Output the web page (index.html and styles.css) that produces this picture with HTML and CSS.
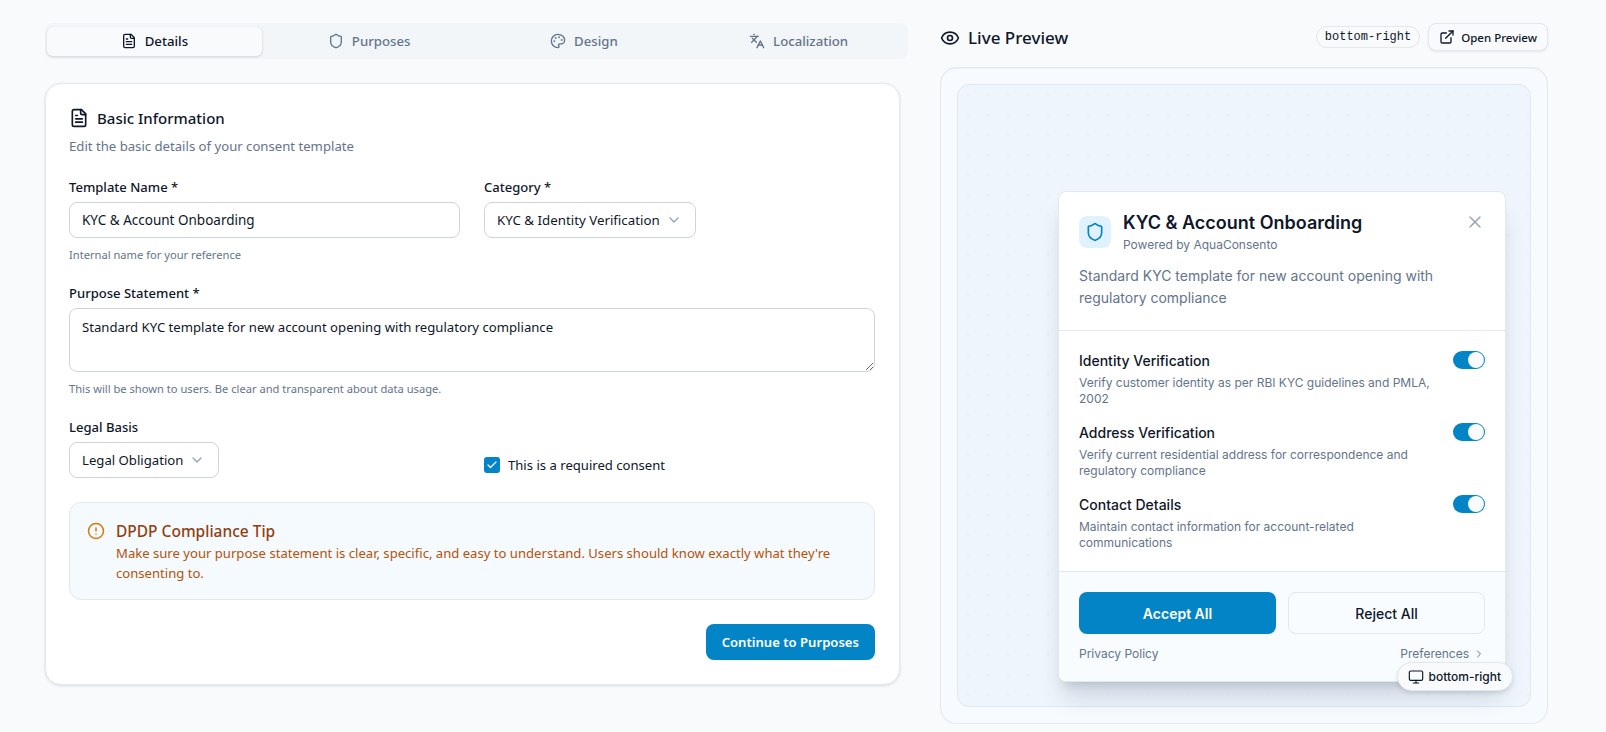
FILE: index.html
```html
<!DOCTYPE html>
<html lang="en">
<head>
<meta charset="utf-8">
<title>Consent Template</title>
<link rel="stylesheet" href="styles.css">
</head>
<body>
<main class="page">
  <section class="editor">
    <nav class="tabs">
      <div class="tab active"><svg class="ic16" viewBox="0 0 24 24"><path d="M15 2H6a2 2 0 0 0-2 2v16a2 2 0 0 0 2 2h12a2 2 0 0 0 2-2V7Z"/><path d="M14 2v4a2 2 0 0 0 2 2h4"/><path d="M10 9H8"/><path d="M16 13H8"/><path d="M16 17H8"/></svg>Details</div>
      <div class="tab"><svg class="ic16" viewBox="0 0 24 24"><path d="M20 13c0 5-3.5 7.5-7.66 8.95a1 1 0 0 1-.67-.01C7.5 20.5 4 18 4 13V6a1 1 0 0 1 1-1c2 0 4.5-1.2 6.24-2.72a1.17 1.17 0 0 1 1.52 0C14.51 3.81 17 5 19 5a1 1 0 0 1 1 1z"/></svg>Purposes</div>
      <div class="tab"><svg class="ic16" viewBox="0 0 24 24"><circle cx="13.5" cy="6.5" r=".5" class="fill"/><circle cx="17.5" cy="10.5" r=".5" class="fill"/><circle cx="8.5" cy="7.5" r=".5" class="fill"/><circle cx="6.5" cy="12.5" r=".5" class="fill"/><path d="M12 2C6.5 2 2 6.5 2 12s4.5 10 10 10c.926 0 1.648-.746 1.648-1.688 0-.437-.18-.835-.437-1.125-.29-.289-.438-.652-.438-1.125a1.64 1.64 0 0 1 1.668-1.668h1.996c3.051 0 5.555-2.503 5.555-5.554C21.965 6.012 17.461 2 12 2z"/></svg>Design</div>
      <div class="tab"><svg class="ic16" viewBox="0 0 24 24"><path d="m5 8 6 6"/><path d="m4 14 6-6 2-3"/><path d="M2 5h12"/><path d="M7 2h1"/><path d="m22 22-5-10-5 10"/><path d="M14 18h6"/></svg>Localization</div>
    </nav>

    <div class="card">
      <h2 class="card-title"><svg class="ic20" viewBox="0 0 24 24"><path d="M15 2H6a2 2 0 0 0-2 2v16a2 2 0 0 0 2 2h12a2 2 0 0 0 2-2V7Z"/><path d="M14 2v4a2 2 0 0 0 2 2h4"/><path d="M10 9H8"/><path d="M16 13H8"/><path d="M16 17H8"/></svg>Basic Information</h2>
      <p class="card-sub">Edit the basic details of your consent template</p>

      <div class="row-two">
        <div class="field">
          <label class="label">Template Name *</label>
          <input class="input" type="text" value="KYC &amp; Account Onboarding">
          <p class="help">Internal name for your reference</p>
        </div>
        <div class="field">
          <label class="label">Category *</label>
          <div class="select select-wide">KYC &amp; Identity Verification<svg class="chev" viewBox="0 0 24 24"><path d="m6 9 6 6 6-6"/></svg></div>
        </div>
      </div>

      <div class="field purpose">
        <label class="label">Purpose Statement *</label>
        <textarea class="textarea">Standard KYC template for new account opening with regulatory compliance</textarea>
        <p class="help">This will be shown to users. Be clear and transparent about data usage.</p>
      </div>

      <div class="row-two legal">
        <div class="field">
          <label class="label">Legal Basis</label>
          <div class="select">Legal Obligation<svg class="chev" viewBox="0 0 24 24"><path d="m6 9 6 6 6-6"/></svg></div>
        </div>
        <div class="check-row">
          <span class="checkbox"><svg viewBox="0 0 24 24"><path d="M20 6 9 17l-5-5"/></svg></span>
          <span>This is a required consent</span>
        </div>
      </div>

      <div class="tip">
        <svg class="tip-ic" viewBox="0 0 24 24"><circle cx="12" cy="12" r="10"/><line x1="12" x2="12" y1="8" y2="12"/><line x1="12" x2="12.01" y1="16" y2="16"/></svg>
        <div>
          <h3 class="tip-title">DPDP Compliance Tip</h3>
          <p class="tip-body">Make sure your purpose statement is clear, specific, and easy to understand. Users should know exactly what they're consenting to.</p>
        </div>
      </div>

      <div class="actions"><button class="btn-continue">Continue to Purposes</button></div>
    </div>
  </section>

  <section class="preview">
    <header class="preview-head">
      <h2 class="preview-title"><svg class="ic20" viewBox="0 0 24 24"><path d="M2.062 12.348a1 1 0 0 1 0-.696 10.75 10.75 0 0 1 19.876 0 1 1 0 0 1 0 .696 10.75 10.75 0 0 1-19.876 0"/><circle cx="12" cy="12" r="3"/></svg>Live Preview</h2>
      <div class="head-right">
        <span class="code-pill">bottom-right</span>
        <button class="btn-open"><svg class="ic16" viewBox="0 0 24 24"><path d="M15 3h6v6"/><path d="M10 14 21 3"/><path d="M18 13v6a2 2 0 0 1-2 2H5a2 2 0 0 1-2-2V8a2 2 0 0 1 2-2h6"/></svg>Open Preview</button>
      </div>
    </header>

    <div class="panel">
      <div class="stage">
        <div class="consent">
          <div class="consent-top">
            <div class="consent-head">
              <span class="shield"><svg viewBox="0 0 24 24"><path d="M20 13c0 5-3.5 7.5-7.66 8.95a1 1 0 0 1-.67-.01C7.5 20.5 4 18 4 13V6a1 1 0 0 1 1-1c2 0 4.5-1.2 6.24-2.72a1.17 1.17 0 0 1 1.52 0C14.51 3.81 17 5 19 5a1 1 0 0 1 1 1z"/></svg></span>
              <div class="consent-names">
                <h3>KYC &amp; Account Onboarding</h3>
                <p>Powered by AquaConsento</p>
              </div>
              <svg class="close" viewBox="0 0 24 24"><path d="M18 6 6 18"/><path d="m6 6 12 12"/></svg>
            </div>
            <p class="consent-desc">Standard KYC template for new account opening with regulatory compliance</p>
          </div>

          <div class="consent-items">
            <div class="item">
              <div class="item-text"><h4>Identity Verification</h4><p>Verify customer identity as per RBI KYC guidelines and PMLA, 2002</p></div>
              <span class="toggle"><span class="knob"></span></span>
            </div>
            <div class="item">
              <div class="item-text"><h4>Address Verification</h4><p>Verify current residential address for correspondence and regulatory compliance</p></div>
              <span class="toggle"><span class="knob"></span></span>
            </div>
            <div class="item">
              <div class="item-text"><h4>Contact Details</h4><p>Maintain contact information for account-related communications</p></div>
              <span class="toggle"><span class="knob"></span></span>
            </div>
          </div>

          <div class="consent-foot">
            <div class="foot-btns">
              <button class="btn-accept">Accept All</button>
              <button class="btn-reject">Reject All</button>
            </div>
            <div class="foot-links">
              <span>Privacy Policy</span>
              <span class="prefs">Preferences<svg viewBox="0 0 24 24"><path d="m9 18 6-6-6-6"/></svg></span>
            </div>
          </div>
        </div>
        <div class="badge"><svg viewBox="0 0 24 24"><rect width="20" height="14" x="2" y="3" rx="2"/><line x1="8" x2="16" y1="21" y2="21"/><line x1="12" x2="12" y1="17" y2="21"/></svg>bottom-right</div>
      </div>
    </div>
  </section>
</main>
</body>
</html>
```

FILE: styles.css
```css
* { box-sizing: border-box; }
html, body { margin: 0; height: 100%; }
body {
  background: #f8fafc;
  color: #0f172a;
  font-family: "Noto Sans", "Open Sans", sans-serif;
  font-size: 14px;
  overflow: hidden;
}
h2, h3, h4, p { margin: 0; }
button { font-family: inherit; cursor: pointer; }
svg {
  fill: none;
  stroke: currentColor;
  stroke-width: 2;
  stroke-linecap: round;
  stroke-linejoin: round;
  flex: none;
}
.fill { fill: currentColor; }
.ic16 { width: 16px; height: 16px; }
.ic20 { width: 20px; height: 20px; }

.page {
  display: grid;
  grid-template-columns: 863px 608px;
  column-gap: 32px;
  padding: 23px 58px 8px 45px;
}

/* tabs */
.tabs {
  display: grid;
  grid-template-columns: repeat(4, 1fr);
  height: 36px;
  padding: 4px 2px 3px;
  background: #f2f6f9;
  border-radius: 8px;
}
.tab {
  display: flex;
  align-items: center;
  justify-content: center;
  gap: 8px;
  padding-bottom: 1px;
  color: #64748b;
  font-weight: 500;
  font-size: 13.2px;
  border-radius: 6px;
}
.tab.active {
  background: #f8fafc;
  color: #0f172a;
  box-shadow: 0 1px 3px rgba(15, 23, 42, .16);
}

/* form card */
.card {
  margin: 24px 8px 0 0;
  padding: 24px 24px 24px 23px;
  height: 602px;
  background: #fff;
  border: 1px solid #e2e8f0;
  border-radius: 16px;
  box-shadow: 0 1px 3px rgba(15, 23, 42, .12);
}
.card-title {
  display: flex;
  align-items: center;
  gap: 8px;
  font-size: 15px;
  line-height: 20px;
  font-weight: 500;
}
.card-sub {
  margin-top: 8px;
  font-size: 13.15px;
  line-height: 20px;
  color: #64748b;
}
.row-two {
  display: grid;
  grid-template-columns: 391px 391px;
  column-gap: 24px;
  margin-top: 21px;
}
.field { display: flex; flex-direction: column; align-items: flex-start; }
.label {
  font-size: 13.05px;
  line-height: 20px;
  font-weight: 500;
  margin-bottom: 5px;
}
.input, .select, .textarea {
  border: 1px solid #cbd5e1;
  border-radius: 8px;
  background: #fff;
  color: #0f172a;
  font-family: inherit;
  font-size: 13.15px;
}
.input { width: 100%; height: 36px; padding: 0 12px; outline: none; font-size: 13.5px; }
.select {
  display: inline-flex;
  align-items: center;
  gap: 6px;
  height: 36px;
  padding: 0 13px 0 12px;
}
.select-wide { font-size: 13.3px; }
.chev { width: 16px; height: 16px; color: #94a3b8; }
.help {
  margin-top: 9px;
  font-size: 11.15px;
  line-height: 16px;
  color: #64748b;
}
.purpose { margin-top: 20px; }
.textarea {
  display: block;
  width: 100%;
  height: 64px;
  padding: 8px 12px;
  line-height: 20px;
  outline: none;
  resize: vertical;
}
.legal { margin-top: 20px; }
.check-row {
  display: flex;
  align-items: flex-end;
  gap: 8px;
  font-size: 13.1px;
  line-height: 20px;
  padding-bottom: 3px;
  align-self: end;
}
.checkbox {
  display: flex;
  align-items: center;
  justify-content: center;
  width: 16px;
  height: 16px;
  margin-bottom: 2px;
  background: #0284c7;
  border-radius: 3px;
  color: #fff;
}
.checkbox svg { width: 12px; height: 12px; stroke-width: 2.5; }

/* tip */
.tip {
  display: flex;
  gap: 11px;
  margin-top: 24px;
  height: 98px;
  padding: 18px 17px 0;
  background: #f5fafe;
  border: 1px solid #e2e8f0;
  border-radius: 12px;
}
.tip-ic { width: 18px; height: 18px; color: #d97706; margin-top: 1px; }
.tip-title {
  font-size: 15.5px;
  line-height: 20px;
  font-weight: 500;
  color: #92400e;
}
.tip-body {
  margin-top: 2px;
  font-size: 13.1px;
  line-height: 20px;
  color: #b45309;
}
.actions { display: flex; justify-content: flex-end; margin-top: 24px; }
.btn-continue {
  height: 36px;
  padding: 0 16px;
  border: 0;
  border-radius: 8px;
  background: #0284c7;
  color: #fff;
  font-size: 13.1px;
  font-weight: 600;
}

/* preview */
.preview-head {
  display: flex;
  align-items: center;
  justify-content: space-between;
  height: 28px;
}
.preview-title {
  display: flex;
  align-items: center;
  gap: 8px;
  padding-top: 1px;
  font-size: 17px;
  font-weight: 500;
}
.head-right { display: flex; align-items: center; gap: 8px; }
.code-pill {
  display: flex;
  align-items: center;
  height: 22px;
  padding: 0 8px;
  background: #f8fafc;
  border: 1px solid #e2e8f0;
  border-radius: 11px;
  font-family: "Liberation Mono", monospace;
  font-size: 12px;
}
.btn-open {
  display: flex;
  align-items: center;
  gap: 6px;
  height: 28px;
  padding: 0 10px 0 10px;
  background: #f8fafc;
  border: 1px solid #e2e8f0;
  border-radius: 8px;
  color: #0f172a;
  font-size: 11.5px;
  font-weight: 500;
  box-shadow: 0 1px 2px rgba(15, 23, 42, .08);
}
.panel {
  margin-top: 16px;
  height: 657px;
  padding: 16px;
  background: #f7fbff;
  border: 1px solid #e2e8f0;
  border-radius: 16px;
  box-shadow: inset 0 1px 2px rgba(15, 23, 42, .04);
}
.stage {
  position: relative;
  display: flex;
  align-items: flex-end;
  justify-content: flex-end;
  height: 100%;
  padding: 24px;
  background-color: #eef5fc;
  background-image: radial-gradient(rgba(148, 163, 184, .05) 1px, transparent 1px);
  background-size: 20px 20px;
  border: 1px solid #e2e8f0;
  border-radius: 12px;
}
.consent {
  width: 448px;
  height: 491px;
  display: flex;
  flex-direction: column;
  background: #fff;
  border: 1px solid #e2e8f0;
  border-radius: 8px;
  overflow: hidden;
  box-shadow: 0 20px 25px -5px rgba(15, 23, 42, .14), 0 8px 10px -6px rgba(15, 23, 42, .14);
  font-family: Inter, "Noto Sans", sans-serif;
}
.consent-top {
  flex: none;
  height: 139px;
  padding: 24px 20px 0;
  border-bottom: 1px solid #e2e8f0;
}
.consent-head { display: flex; align-items: flex-start; gap: 12px; }
.shield {
  display: flex;
  align-items: center;
  justify-content: center;
  width: 32px;
  height: 32px;
  background: #e0f2fe;
  border-radius: 8px;
  color: #0284c7;
}
.shield svg { width: 20px; height: 20px; }
.consent-names { flex: 1; margin-top: -5px; }
.consent-names h3 { font-size: 18px; line-height: 24px; font-weight: 600; color: #0f172a; }
.consent-names p { font-size: 12px; line-height: 16px; color: #64748b; margin-top: 2px; }
.close { width: 20px; height: 20px; margin-top: -4px; color: #94a3b8; stroke-width: 1.75; }
.consent-desc {
  margin-top: 12px;
  font-size: 14px;
  line-height: 22px;
  color: #64748b;
}
.consent-items {
  flex: 1;
  display: flex;
  flex-direction: column;
  gap: 16px;
  padding: 20px 20px 0;
}
.item { display: flex; justify-content: space-between; gap: 16px; }
.item-text { flex: 1; }
.item h4 { font-size: 14px; line-height: 20px; font-weight: 500; color: #0f172a; }
.item p { margin-top: 4px; font-size: 12px; line-height: 16px; color: #64748b; }
.toggle {
  position: relative;
  flex: none;
  width: 32px;
  height: 18px;
  background: #0284c7;
  border-radius: 9px;
}
.knob {
  position: absolute;
  right: 1px;
  top: 1px;
  width: 16px;
  height: 16px;
  background: #f8fafc;
  border-radius: 50%;
}
.consent-foot {
  flex: none;
  height: 110px;
  padding: 20px 20px 0;
  background: #f8fcff;
  border-top: 1px solid #e2e8f0;
}
.foot-btns { display: grid; grid-template-columns: 1fr 1fr; gap: 12px; }
.btn-accept, .btn-reject {
  height: 42px;
  border-radius: 8px;
  font-family: inherit;
  font-size: 14px;
  font-weight: 600;
}
.btn-accept { background: #0284c7; color: #fff; border: 0; }
.btn-reject { background: transparent; color: #0f172a; border: 1px solid #e2e8f0; font-weight: 500; }
.foot-links {
  display: flex;
  justify-content: space-between;
  align-items: center;
  margin-top: 12px;
  font-size: 12px;
  line-height: 16px;
  color: #64748b;
}
.prefs { display: flex; align-items: center; gap: 4px; }
.prefs svg { width: 12px; height: 12px; }
.badge {
  position: absolute;
  right: 17px;
  bottom: 15px;
  display: flex;
  align-items: center;
  gap: 5px;
  height: 29px;
  padding: 0 11px 0 10px;
  background: #f8fafc;
  border: 1px solid #e2e8f0;
  border-radius: 15px;
  box-shadow: 0 2px 4px rgba(15, 23, 42, .12);
  font-family: Inter, sans-serif;
  font-size: 12px;
  font-weight: 500;
  color: #0f172a;
}
.badge svg { width: 16px; height: 16px; stroke-width: 1.75; }
```
